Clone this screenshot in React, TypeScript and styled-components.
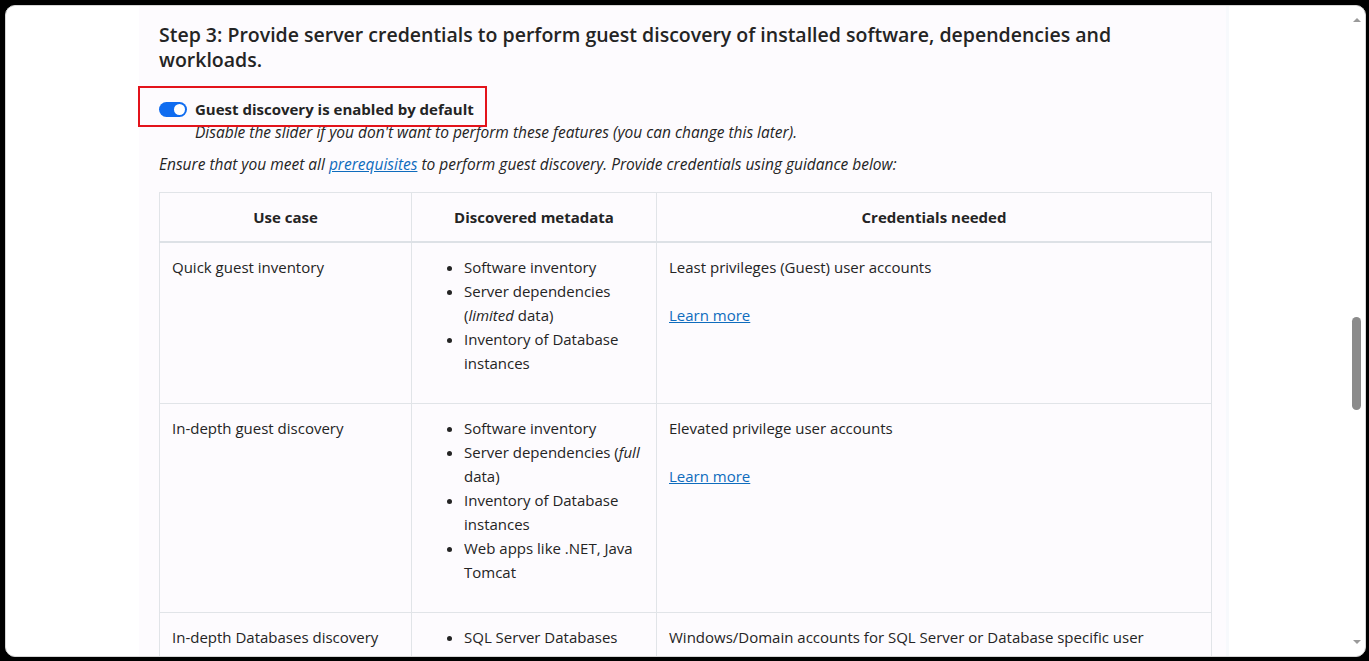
import React from "react";
import styled, { createGlobalStyle } from "styled-components";

const GlobalStyle = createGlobalStyle`
  html, body {
    margin: 0;
    padding: 0;
    background: #000;
    height: 100%;
    overflow: hidden;
  }
  body {
    font-family: "Open Sans", "Noto Sans", Arial, sans-serif;
    color: #242424;
  }
`;

const Frame = styled.div`
  height: 661px;
  box-sizing: border-box;
  padding: 5px 3px 4px 5px;
  display: flex;
`;

const Window = styled.div`
  flex: 1;
  display: flex;
  background: #fff;
  border: 1px solid #d6d6d6;
  border-radius: 10px;
  overflow: hidden;
`;

const Viewport = styled.div`
  flex: 1;
  overflow: hidden;
  padding-left: 133px;
`;

const Panel = styled.div`
  width: 1090px;
  box-sizing: border-box;
  padding: 16px 17px 40px 20px;
  background: #fdfbfe;
  border-right: 3px solid #f7f9fc;
`;

const Heading = styled.h2`
  margin: 0;
  font-size: 19.5px;
  font-weight: 600;
  line-height: 25px;
  color: #242424;
`;

const ToggleRow = styled.div`
  position: relative;
  display: inline-flex;
  align-items: center;
  gap: 8px;
  margin-top: 27px;
  height: 20px;

  /* red annotation drawn round the switch */
  &::after {
    content: "";
    position: absolute;
    top: -13px;
    bottom: -8px;
    left: -21px;
    right: -13px;
    border: 2px solid #e3131b;
  }
`;

const Switch = styled.span<{ $on: boolean }>`
  width: 28px;
  height: 15px;
  border-radius: 8px;
  background: ${(p) => (p.$on ? "#0f6cf0" : "#c8c8c8")};
  display: flex;
  align-items: center;
  justify-content: ${(p) => (p.$on ? "flex-end" : "flex-start")};
  padding: 0 2px;
  box-sizing: border-box;

  &::before {
    content: "";
    width: 11px;
    height: 11px;
    border-radius: 50%;
    background: #fff;
  }
`;

const SwitchLabel = styled.span`
  font-size: 15px;
  font-weight: 700;
  line-height: 20px;
`;

const Note = styled.p<{ $indent?: boolean }>`
  margin: ${(p) => (p.$indent ? "2px 0 0 36px" : "12px 0 0")};
  font-size: 15.5px;
  font-style: italic;
  line-height: 20px;
`;

const Link = styled.a`
  color: #0f6cbd;
  text-decoration: underline;
`;

const Table = styled.table`
  margin-top: 18px;
  width: 1053px;
  border-collapse: collapse;
  table-layout: fixed;
  font-size: 15px;
  line-height: 24px;

  th,
  td {
    border: 1px solid #e1e4e8;
    padding: 12px;
    text-align: left;
    vertical-align: top;
  }

  th {
    text-align: center;
    font-weight: 700;
    border-bottom: 2px solid #dde1e6;
  }
`;

const Bullets = styled.ul`
  margin: 0 0 16px;
  padding-left: 40px;
`;

const LearnMore = styled.div`
  margin-top: 24px;
`;

const Scrollbar = styled.div`
  width: 17px;
  display: flex;
  flex-direction: column;
  align-items: center;
`;

const Arrow = styled.span<{ $down?: boolean }>`
  margin: ${(p) => (p.$down ? "auto 0 12px" : "12px 0 0")};
  width: 0;
  height: 0;
  border-left: 4px solid transparent;
  border-right: 4px solid transparent;
  ${(p) =>
    p.$down
      ? "border-top: 4px solid #9a9a9a;"
      : "border-bottom: 4px solid #9a9a9a;"}
`;

const Thumb = styled.span`
  width: 9px;
  height: 93px;
  border-radius: 5px;
  background: #8b8b8b;
`;

type Row = {
  useCase: string;
  meta: React.ReactNode[];
  creds: string;
  learn?: boolean;
};

const rows: Row[] = [
  {
    useCase: "Quick guest inventory",
    meta: [
      "Software inventory",
      <>
        Server dependencies (<i>limited</i> data)
      </>,
      "Inventory of Database instances",
    ],
    creds: "Least privileges (Guest) user accounts",
    learn: true,
  },
  {
    useCase: "In-depth guest discovery",
    meta: [
      "Software inventory",
      <>
        Server dependencies (<i>full</i> data)
      </>,
      "Inventory of Database instances",
      "Web apps like .NET, Java Tomcat",
    ],
    creds: "Elevated privilege user accounts",
    learn: true,
  },
  {
    useCase: "In-depth Databases discovery (SQL Server and MySQL)",
    meta: ["SQL Server Databases", "MySQL Databases"],
    creds:
      "Windows/Domain accounts for SQL Server or Database specific user accounts for SQL Server and MySQL",
  },
];

export default function App() {
  const thumbTop = 295;
  return (
    <>
      <GlobalStyle />
      <Frame>
        <Window>
          <Viewport>
            <Panel>
              <Heading>
                Step 3: Provide server credentials to perform guest discovery of
                installed software, dependencies and workloads.
              </Heading>
              <ToggleRow>
                <Switch $on />
                <SwitchLabel>Guest discovery is enabled by default</SwitchLabel>
              </ToggleRow>
              <Note $indent>
                Disable the slider if you don't want to perform these features
                (you can change this later).
              </Note>
              <Note>
                Ensure that you meet all <Link href="#">prerequisites</Link> to
                perform guest discovery. Provide credentials using guidance
                below:
              </Note>
              <Table>
                <colgroup>
                  <col style={{ width: 252 }} />
                  <col style={{ width: 245 }} />
                  <col />
                </colgroup>
                <thead>
                  <tr>
                    <th>Use case</th>
                    <th>Discovered metadata</th>
                    <th>Credentials needed</th>
                  </tr>
                </thead>
                <tbody>
                  {rows.map((r) => (
                    <tr key={r.useCase}>
                      <td>{r.useCase}</td>
                      <td>
                        <Bullets>
                          {r.meta.map((m, i) => (
                            <li key={i}>{m}</li>
                          ))}
                        </Bullets>
                      </td>
                      <td>
                        {r.creds}
                        {r.learn && (
                          <LearnMore>
                            <Link href="#">Learn more</Link>
                          </LearnMore>
                        )}
                      </td>
                    </tr>
                  ))}
                </tbody>
              </Table>
            </Panel>
          </Viewport>
          <Scrollbar>
            <Arrow />
            <Thumb style={{ marginTop: thumbTop }} />
            <Arrow $down />
          </Scrollbar>
        </Window>
      </Frame>
    </>
  );
}
